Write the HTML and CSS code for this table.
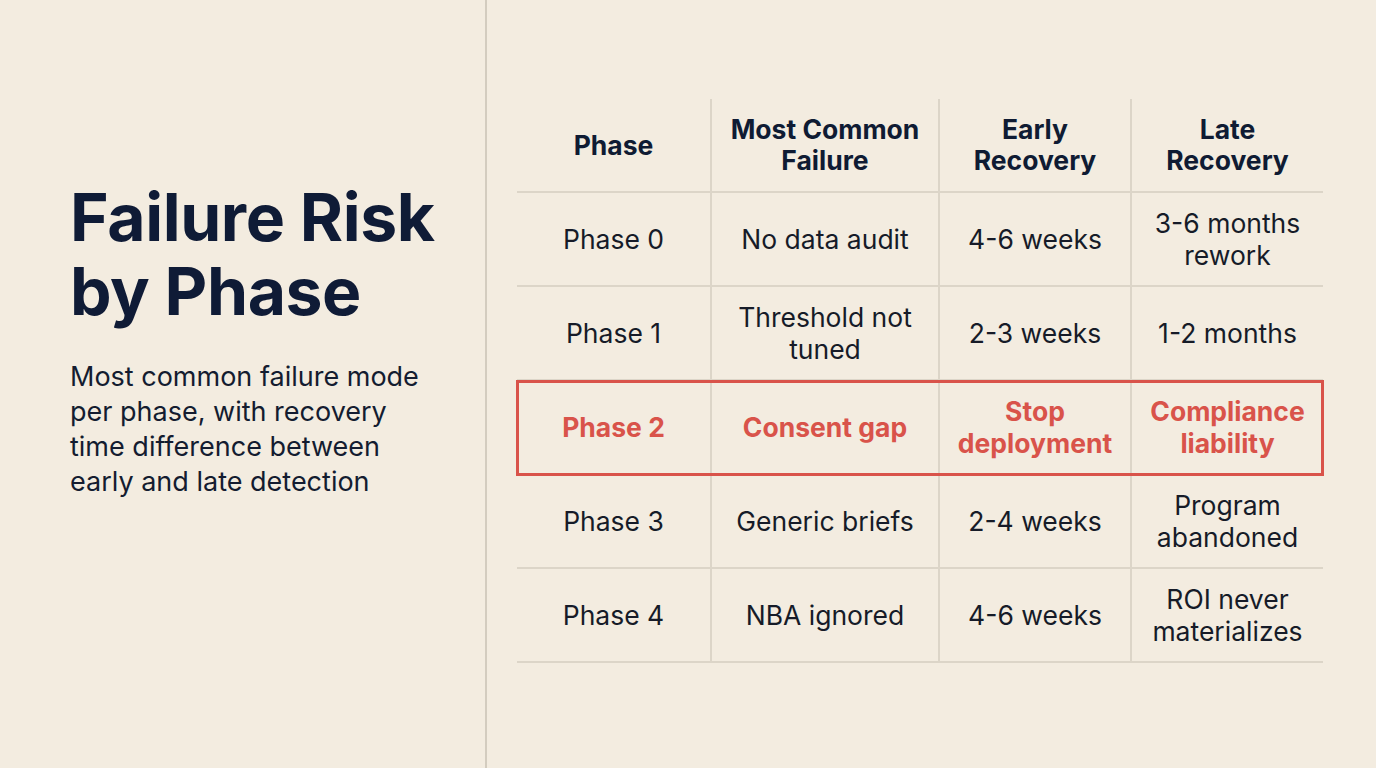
FILE: index.html
```html
<!DOCTYPE html>
<html lang="en">
<head>
<meta charset="utf-8">
<title>Failure Risk by Phase</title>
<link rel="stylesheet" href="styles.css">
</head>
<body>
<main class="slide">
  <section class="intro">
    <h1 class="title">Failure Risk<br>by Phase</h1>
    <p class="subtitle">Most common failure mode<br>per phase, with recovery<br>time difference between<br>early and late detection</p>
  </section>
  <section class="content">
    <div class="table">
      <div class="row head">
        <div class="cell">Phase</div>
        <div class="cell">Most Common<br>Failure</div>
        <div class="cell">Early<br>Recovery</div>
        <div class="cell">Late<br>Recovery</div>
      </div>
      <div class="row">
        <div class="cell">Phase 0</div>
        <div class="cell">No data audit</div>
        <div class="cell">4-6 weeks</div>
        <div class="cell">3-6 months<br>rework</div>
      </div>
      <div class="row">
        <div class="cell">Phase 1</div>
        <div class="cell">Threshold not<br>tuned</div>
        <div class="cell">2-3 weeks</div>
        <div class="cell">1-2 months</div>
      </div>
      <div class="row alert">
        <div class="cell">Phase 2</div>
        <div class="cell">Consent gap</div>
        <div class="cell">Stop<br>deployment</div>
        <div class="cell">Compliance<br>liability</div>
      </div>
      <div class="row">
        <div class="cell">Phase 3</div>
        <div class="cell">Generic briefs</div>
        <div class="cell">2-4 weeks</div>
        <div class="cell">Program<br>abandoned</div>
      </div>
      <div class="row">
        <div class="cell">Phase 4</div>
        <div class="cell">NBA ignored</div>
        <div class="cell">4-6 weeks</div>
        <div class="cell">ROI never<br>materializes</div>
      </div>
    </div>
  </section>
</main>
</body>
</html>
```
FILE: styles.css
```css
* { box-sizing: border-box; }
html, body {
  margin: 0;
  padding: 0;
  background: #f3ece0;
}
body {
  font-family: Inter, "Noto Sans", "Liberation Sans", sans-serif;
  color: #141a2a;
}
.slide {
  display: flex;
  width: 1376px;
  height: 768px;
}
.intro {
  width: 487px;
  flex: none;
  border-right: 2px solid #d3ccbf;
  padding: 180px 0 0 70px;
}
.title {
  margin: 0;
  font-size: 66px;
  line-height: 74px;
  font-weight: 700;
  color: #0f1b36;
  letter-spacing: -0.4px;
}
.subtitle {
  margin: 31px 0 0;
  font-size: 27px;
  line-height: 35px;
  font-weight: 400;
  color: #141c30;
}
.content {
  flex: 1;
  padding: 99px 0 0 30px;
}
.table {
  width: 806px;
}
.row {
  display: grid;
  grid-template-columns: 193px 228px 192px 193px;
  height: 94px;
  border-bottom: 2px solid #dcd5c8;
}
.cell {
  display: flex;
  align-items: center;
  justify-content: center;
  text-align: center;
  font-size: 26.5px;
  line-height: 32px;
  color: #161b28;
}
.cell + .cell {
  border-left: 2px solid #dcd5c8;
}
.head .cell {
  font-weight: 700;
  color: #0f1b33;
  line-height: 31px;
}
.row.alert {
  outline: 3px solid #d9534a;
  outline-offset: -2px;
}
.alert .cell {
  color: #d9534a;
  font-weight: 700;
}
```
